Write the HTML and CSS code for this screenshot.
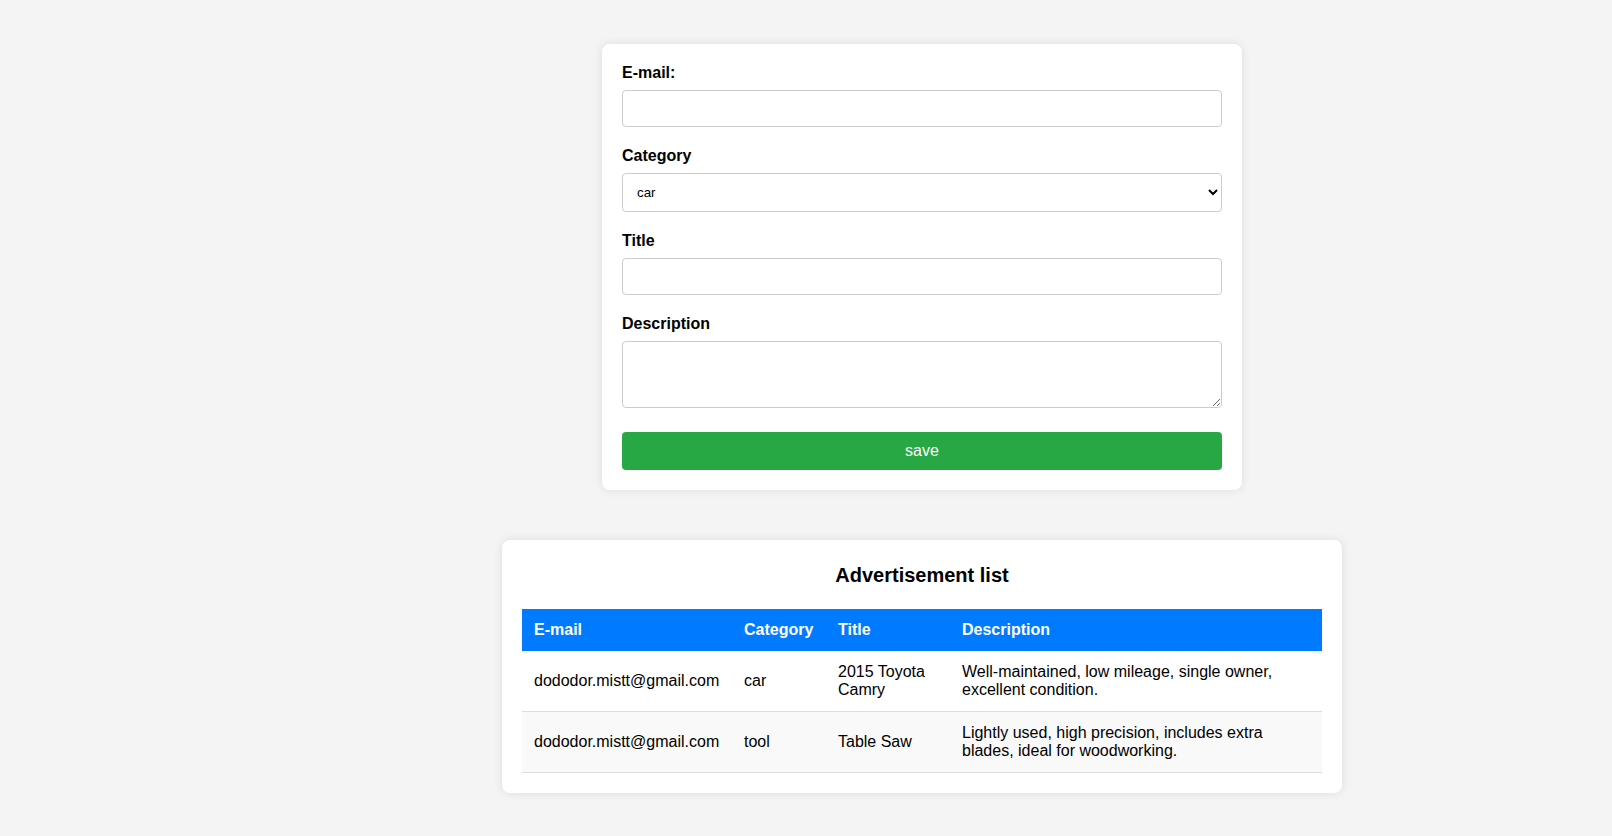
FILE: index.html
```html
<!DOCTYPE html>
<html lang="en">
<head>
<meta charset="utf-8">
<title>Advertisements</title>
<link rel="stylesheet" href="styles.css">
</head>
<body>
<main class="page">
  <form class="card form-card">
    <label class="field-label" for="email">E-mail:</label>
    <input class="field" id="email" type="email">
    <label class="field-label" for="category">Category</label>
    <select class="field field-select" id="category">
      <option>car</option>
      <option>tool</option>
    </select>
    <label class="field-label" for="title">Title</label>
    <input class="field" id="title" type="text">
    <label class="field-label" for="description">Description</label>
    <textarea class="field field-area" id="description"></textarea>
    <button class="save-btn" type="button">save</button>
  </form>

  <section class="card list-card">
    <h2 class="list-title">Advertisement list</h2>
    <table class="ads">
      <thead>
        <tr>
          <th class="col-email">E-mail</th>
          <th class="col-cat">Category</th>
          <th class="col-title">Title</th>
          <th>Description</th>
        </tr>
      </thead>
      <tbody>
        <tr>
          <td>dododor.mistt@gmail.com</td>
          <td>car</td>
          <td>2015 Toyota Camry</td>
          <td>Well-maintained, low mileage, single owner, excellent condition.</td>
        </tr>
        <tr class="alt">
          <td>dododor.mistt@gmail.com</td>
          <td>tool</td>
          <td>Table Saw</td>
          <td>Lightly used, high precision, includes extra blades, ideal for woodworking.</td>
        </tr>
      </tbody>
    </table>
  </section>
</main>
</body>
</html>
```
FILE: styles.css
```css
* { box-sizing: border-box; }

html, body {
  margin: 0;
  padding: 0;
  background: #f4f4f4;
  font-family: "Liberation Sans", Arial, sans-serif;
  color: #000;
}

.page {
  padding: 44px 0 40px 232px;
  display: flex;
  flex-direction: column;
  align-items: center;
}

.card {
  background: #fff;
  border-radius: 8px;
  box-shadow: 0 0 10px rgba(0, 0, 0, 0.1);
  padding: 20px;
}

.form-card {
  width: 640px;
  display: flex;
  flex-direction: column;
}

.field-label {
  display: block;
  font-size: 16px;
  font-weight: bold;
  line-height: 18px;
  margin-bottom: 8px;
}

.field {
  display: block;
  width: 100%;
  height: 37px;
  margin: 0 0 20px 0;
  padding: 10px;
  border: 1px solid #ccc;
  border-radius: 4px;
  font-family: "Liberation Sans", Arial, sans-serif;
  font-size: 13.33px;
  background: #fff;
  color: #000;
}

.field-select {
  height: 39px;
  margin-bottom: 20px;
}

.field-area {
  height: 67px;
  margin-bottom: 24px;
  resize: vertical;
}

.save-btn {
  display: block;
  width: 100%;
  height: 38px;
  border: none;
  border-radius: 4px;
  background: #28a745;
  color: #fff;
  font-family: "Liberation Sans", Arial, sans-serif;
  font-size: 16px;
  cursor: pointer;
}

.list-card {
  width: 840px;
  margin-top: 50px;
}

.list-title {
  margin: 4px 0 22px;
  font-size: 20px;
  line-height: 23px;
  text-align: center;
}

.ads {
  width: 100%;
  border-collapse: collapse;
  font-size: 16px;
}

.ads th,
.ads td {
  padding: 12px;
  text-align: left;
  line-height: 18px;
  border-bottom: 1px solid #ddd;
}

.ads th {
  background: #007bff;
  color: #fff;
  font-weight: bold;
  border-bottom: none;
}

.col-email { width: 210px; }
.col-cat { width: 94px; }
.col-title { width: 124px; }

.ads tr.alt td {
  background: #f9f9f9;
}
```
